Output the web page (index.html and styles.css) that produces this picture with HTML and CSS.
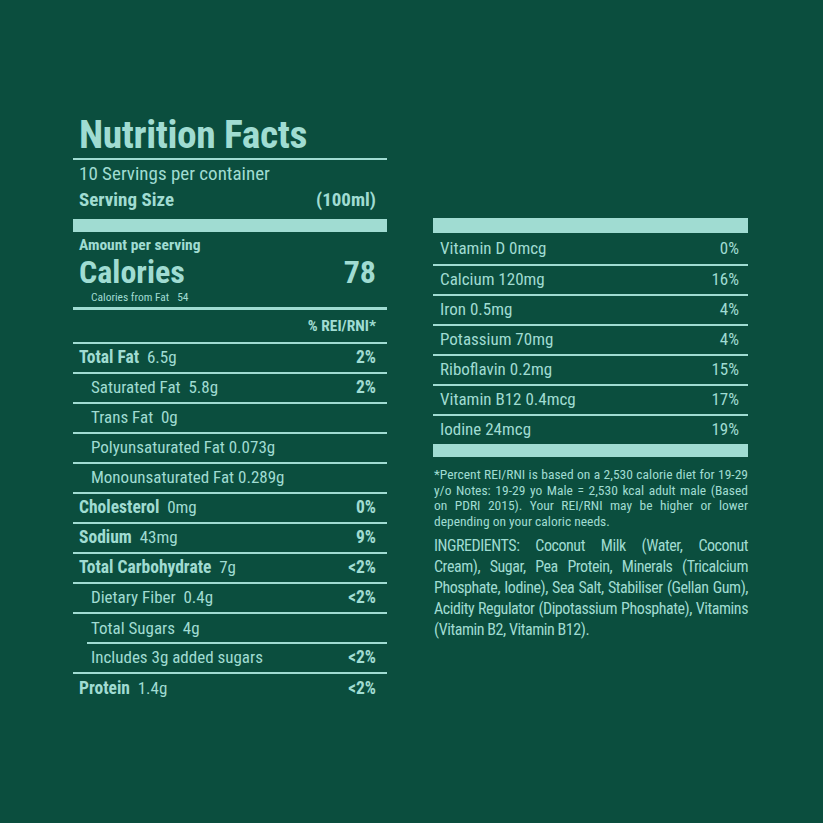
FILE: index.html
```html
<!DOCTYPE html>
<html lang="en">
<head>
<meta charset="utf-8">
<title>Nutrition Facts</title>
<link rel="stylesheet" href="styles.css">
</head>
<body>
<div class="page">
  <section class="left">
    <h1 class="title">Nutrition Facts</h1>
    <div class="servings">10 Servings per container</div>
    <div class="size"><span>Serving Size</span><span>(100ml)</span></div>
    <div class="bar"></div>
    <div class="amount">Amount per serving</div>
    <div class="calories"><span>Calories</span><span>78</span></div>
    <div class="fatcal">Calories from Fat&nbsp;&nbsp;&nbsp;54</div>
    <div class="rei">% REI/RNI*</div>
    <div class="row"><span><b>Total Fat</b>&nbsp; 6.5g</span><b>2%</b></div>
    <div class="row ind"><span>Saturated Fat&nbsp; 5.8g</span><b>2%</b></div>
    <div class="row ind"><span>Trans Fat&nbsp; 0g</span></div>
    <div class="row ind"><span>Polyunsaturated Fat 0.073g</span></div>
    <div class="row ind"><span>Monounsaturated Fat 0.289g</span></div>
    <div class="row"><span><b>Cholesterol</b>&nbsp; 0mg</span><b>0%</b></div>
    <div class="row"><span><b>Sodium</b>&nbsp; 43mg</span><b>9%</b></div>
    <div class="row"><span><b>Total Carbohydrate</b>&nbsp; 7g</span><b>&lt;2%</b></div>
    <div class="row ind"><span>Dietary Fiber&nbsp; 0.4g</span><b>&lt;2%</b></div>
    <div class="row ind sub"><span>Total Sugars&nbsp; 4g</span></div>
    <div class="row ind"><span>Includes 3g added sugars</span><b>&lt;2%</b></div>
    <div class="row last"><span><b>Protein</b>&nbsp; 1.4g</span><b>&lt;2%</b></div>
  </section>
  <section class="right">
    <div class="bar rbar"></div>
    <div class="vrow first"><span>Vitamin D 0mcg</span><span>0%</span></div>
    <div class="vrow"><span>Calcium 120mg</span><span>16%</span></div>
    <div class="vrow"><span>Iron 0.5mg</span><span>4%</span></div>
    <div class="vrow"><span>Potassium 70mg</span><span>4%</span></div>
    <div class="vrow"><span>Riboflavin 0.2mg</span><span>15%</span></div>
    <div class="vrow"><span>Vitamin B12 0.4mcg</span><span>17%</span></div>
    <div class="vrow last"><span>Iodine 24mcg</span><span>19%</span></div>
    <div class="bar rbar2"></div>
    <p class="note">*Percent REI/RNI is based on a 2,530 calorie diet for 19-29 y/o Notes: 19-29 yo Male = 2,530 kcal adult male (Based on PDRI 2015). Your REI/RNI may be higher or lower depending on your caloric needs.</p>
    <p class="ingr">
      <span class="jl">INGREDIENTS: Coconut Milk (Water, Coconut</span>
      <span class="jl">Cream), Sugar, Pea Protein, Minerals (Tricalcium</span>
      <span class="jl">Phosphate, Iodine), Sea Salt, Stabiliser (Gellan Gum),</span>
      <span class="jl">Acidity Regulator (Dipotassium Phosphate), Vitamins</span>
      <span class="ll">(Vitamin B2, Vitamin B12).</span>
    </p>
  </section>
</div>
</body>
</html>
```
FILE: styles.css
```css
* { box-sizing: border-box; }
html, body { margin: 0; padding: 0; }
body {
  background: #0b4e3e;
  color: #a0dcd2;
  font-family: "Liberation Sans Narrow", "Roboto Condensed", "Arial Narrow", Roboto, sans-serif;
  width: 823px;
  height: 823px;
  overflow: hidden;
}
.page {
  display: flex;
  gap: 46px;
  padding: 112px 0 0 73px;
}
.left { width: 314px; }
.right { width: 315px; margin-top: 106px; }

.title {
  margin: 0;
  font-size: 39.5px;
  font-weight: bold;
  line-height: 46px;
  padding-left: 6px;
  border-bottom: 2px solid #a0dcd2;
  letter-spacing: -0.4px;
}
.servings {
  font-size: 19px;
  line-height: 28px;
  padding-left: 6px;
}
.size {
  display: flex;
  justify-content: space-between;
  font-size: 19px;
  font-weight: bold;
  line-height: 24px;
  padding: 0 11px 0 6px;
}
.bar {
  background: #a0dcd2;
  height: 13px;
  margin-top: 7px;
}
.amount {
  font-size: 15.5px;
  font-weight: bold;
  line-height: 18px;
  padding: 4px 0 0 6px;
}
.calories {
  display: flex;
  justify-content: space-between;
  font-size: 32px;
  font-weight: bold;
  line-height: 36px;
  padding: 0 11px 0 6px;
}
.fatcal {
  font-size: 11.5px;
  line-height: 14px;
  padding: 0 0 0 18px;
  height: 20px;
  border-bottom: 3px solid #a0dcd2;
}
.rei {
  text-align: right;
  font-size: 15.5px;
  font-weight: bold;
  line-height: 32px;
  padding-right: 11px;
  border-bottom: 2px solid #a0dcd2;
}
.row {
  display: flex;
  justify-content: space-between;
  align-items: center;
  height: 30px;
  padding: 0 11px 2px 6px;
  font-size: 17px;
  border-bottom: 2px solid #a0dcd2;
}
.row b { font-weight: bold; font-size: 17.5px; }
.row.ind > span:first-child { padding-left: 12px; }
.row.sub { border-bottom: none; background: linear-gradient(#a0dcd2, #a0dcd2) no-repeat 14px 100% / calc(100% - 14px) 2px; }
.row.last { border-bottom: none; }

.rbar { height: 15px; margin-top: 0; }
.rbar2 { height: 13px; margin-top: 0; }
.vrow {
  display: flex;
  justify-content: space-between;
  align-items: center;
  height: 30px;
  padding: 0 9px 2px 7px;
  font-size: 17px;
  border-bottom: 2px solid #a0dcd2;
}
.vrow.first { height: 33px; }
.vrow.last { border-bottom: none; height: 28px; }
.note {
  margin: 10px 0 0;
  font-size: 13.5px;
  line-height: 15.5px;
  text-align: justify;
  padding-left: 1px;
}
.ingr {
  margin: 6px 0 0;
  font-size: 16px;
  line-height: 21px;
  letter-spacing: -0.45px;
  padding-left: 1px;
}
.ingr .jl {
  display: block;
  white-space: nowrap;
  text-align: justify;
  text-align-last: justify;
}
.ingr .ll { display: block; }
```
